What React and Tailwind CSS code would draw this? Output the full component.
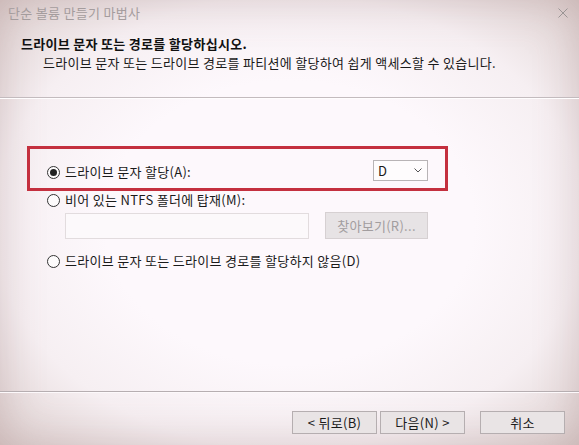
export default function App() {
  const Radio = ({ checked }) => (
    <span className="w-[13px] h-[13px] rounded-full border border-[#333] bg-[#fdfbfc] flex items-center justify-center shrink-0">
      {checked && <span className="w-[7px] h-[7px] rounded-full bg-[#222]" />}
    </span>
  );
  return (
    <div className="relative w-[579px] h-[445px] overflow-hidden bg-[radial-gradient(ellipse_at_center,#fdf8fc_45%,#f6eff2_72%,#dfd2d1_100%)] shadow-[inset_0_0_45px_rgba(140,100,100,0.28)] font-['Noto_Sans_CJK_KR',sans-serif] text-[13px] leading-[16px] text-[#1a1a1a] flex flex-col">
      <div className="h-[97px] flex flex-col shrink-0">
        <div className="flex items-center justify-between pl-[8px] pr-[11px] pt-[5px] h-[21px]">
          <span className="text-[#a49c9d] tracking-[0.3px]">단순 볼륨 만들기 마법사</span>
          <svg width="10" height="10" viewBox="0 0 10 10" className="shrink-0">
            <path d="M0.5 0.5 L9.5 9.5 M9.5 0.5 L0.5 9.5" stroke="#9a9595" strokeWidth="1" fill="none" />
          </svg>
        </div>
        <div className="pl-[21px] mt-[16px] font-bold text-[#111] leading-[14px] tracking-[0.3px]">드라이브 문자 또는 경로를 할당하십시오.</div>
        <div className="pl-[43px] mt-[5px] leading-[14px] tracking-[0.3px]">드라이브 문자 또는 드라이브 경로를 파티션에 할당하여 쉽게 액세스할 수 있습니다.</div>
      </div>
      <div className="h-px bg-[#c3bbbe] shrink-0" />
      <div className="h-px bg-[#fffdfe] shrink-0" />

      <div className="flex flex-col flex-1 tracking-[0.3px]">
        <div className="mt-[47px] ml-[27px] w-[421px] h-[45px] border-[3px] border-[#c4303f] flex items-start pl-[17px] pr-[17px] pt-[11px]">
          <div className="flex items-center gap-[5px] pt-[4px]">
            <Radio checked />
            <span>드라이브 문자 할당(A):</span>
          </div>
          <div className="ml-auto w-[55px] h-[21px] border border-[#b8b4b6] bg-[#fefcfd] flex items-center justify-between pl-[4px] pr-[5px]">
            <span className="text-[13px]">D</span>
            <svg width="8" height="5" viewBox="0 0 8 5">
              <path d="M0.5 0.5 L4 4 L7.5 0.5" stroke="#555" strokeWidth="1" fill="none" />
            </svg>
          </div>
        </div>

        <div className="mt-[1px] ml-[47px] flex items-center gap-[5px] h-[16px]">
          <Radio />
          <span>비어 있는 NTFS 폴더에 탑재(M):</span>
        </div>

        <div className="mt-[4px] ml-[65px] flex items-start">
          <div className="w-[244px] h-[26px] mt-[1px] border border-[#e2dcde] bg-[#fcf9fb]" />
          <div className="ml-[16px] w-[103px] h-[27px] border border-[#d6d0d2] bg-[#e7e3e5] flex items-center justify-center text-[#a29d9f]">
            찾아보기(R)...
          </div>
        </div>

        <div className="mt-[14px] ml-[47px] flex items-center gap-[5px] h-[16px]">
          <Radio />
          <span>드라이브 문자 또는 드라이브 경로를 할당하지 않음(D)</span>
        </div>
      </div>

      <div className="h-px bg-[#b6aeb1] shrink-0" />
      <div className="h-px bg-[#fdf9fb] shrink-0" />
      <div className="h-[52px] shrink-0 flex items-start justify-end pt-[18px] pr-[14px] tracking-[0.3px]">
        <button className="w-[85px] h-[23px] border border-[#b5aeb0] bg-[#e9e4e5] flex items-center justify-center text-[#1a1a1a]">&lt; 뒤로(B)</button>
        <button className="ml-[3px] w-[85px] h-[23px] border border-[#b5aeb0] bg-[#e9e4e5] flex items-center justify-center text-[#1a1a1a]">다음(N) &gt;</button>
        <button className="ml-[15px] w-[85px] h-[23px] border border-[#b5aeb0] bg-[#e9e4e5] flex items-center justify-center text-[#1a1a1a]">취소</button>
      </div>
    </div>
  );
}
